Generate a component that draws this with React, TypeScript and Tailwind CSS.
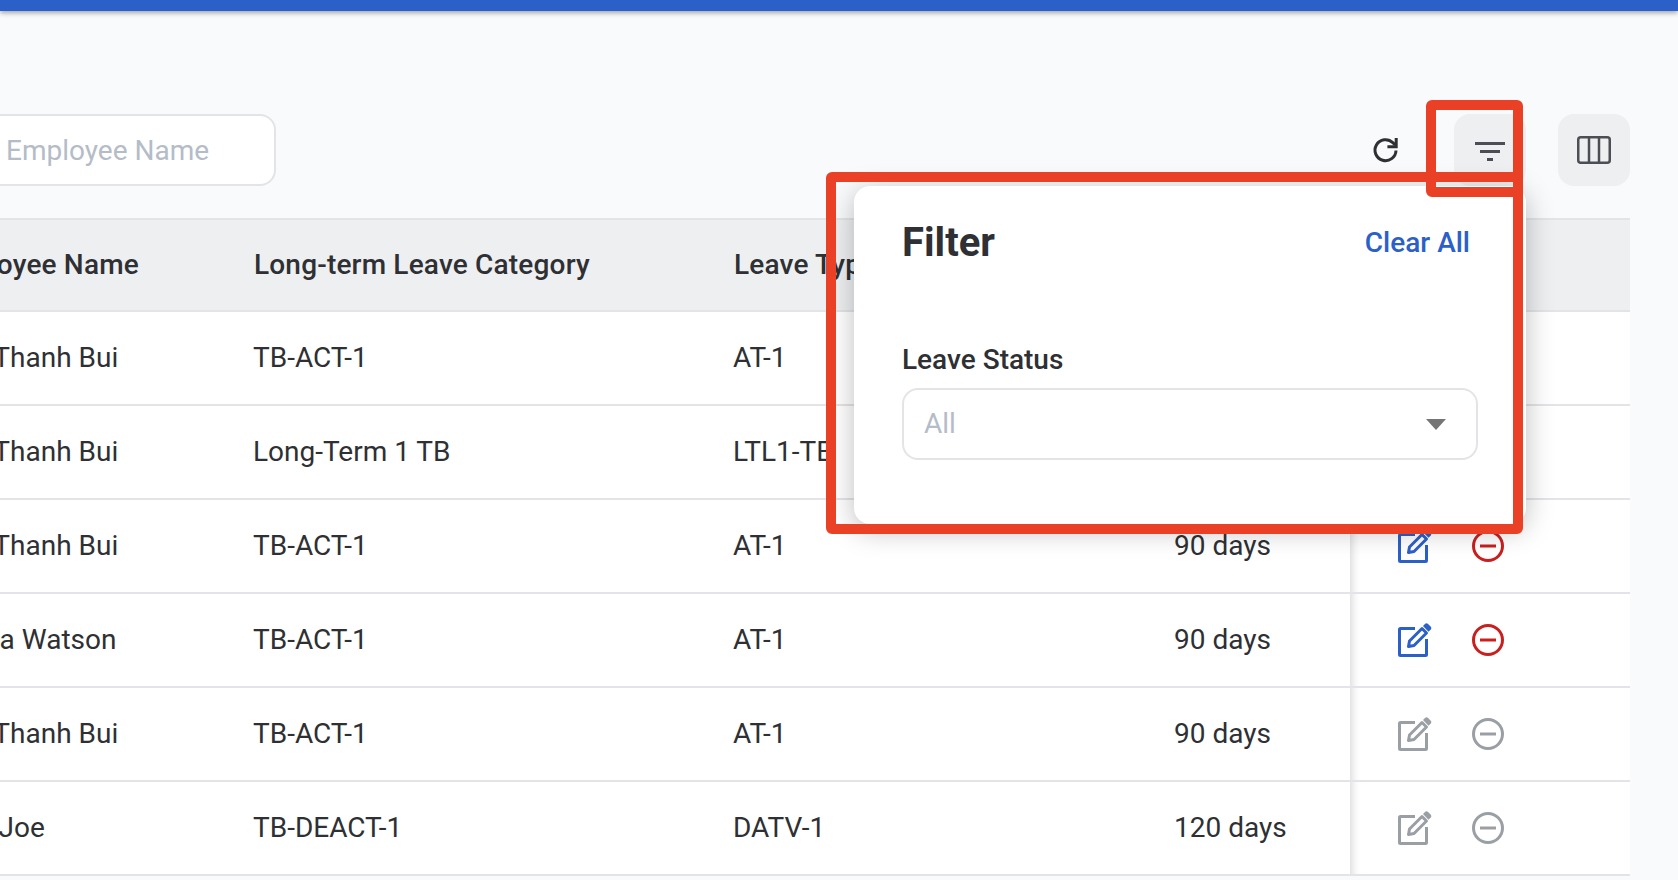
const rows = [
  { name: 'Kim Thanh Bui', category: 'TB-ACT-1', type: 'AT-1', days: '90 days', active: true },
  { name: 'Kim Thanh Bui', category: 'Long-Term 1 TB', type: 'LTL1-TB', days: '90 days', active: true },
  { name: 'Kim Thanh Bui', category: 'TB-ACT-1', type: 'AT-1', days: '90 days', active: true },
  { name: 'Janna Watson', category: 'TB-ACT-1', type: 'AT-1', days: '90 days', active: true },
  { name: 'Kim Thanh Bui', category: 'TB-ACT-1', type: 'AT-1', days: '90 days', active: false },
  { name: 'Max Joe', category: 'TB-DEACT-1', type: 'DATV-1', days: '120 days', active: false },
]

function RefreshIcon() {
  return (
    <svg width="30" height="30" viewBox="0 0 30 30" fill="none" className="text-[#2e3033]">
      <path d="M25 15.500a10.500 10.500 0 1 1-3.200-7.900l2.400 2.300" stroke="currentColor" strokeWidth="3" />
      <path d="M25.200 3v8.800h-8.800" stroke="currentColor" strokeWidth="3" />
    </svg>
  )
}

function FilterIcon() {
  return (
    <svg width="30" height="20" viewBox="0 0 30 20" className="mt-[3px] text-[#4b4e54]">
      <rect x="0" y="0" width="30" height="3" fill="currentColor" />
      <rect x="5" y="8" width="20" height="3" fill="currentColor" />
      <rect x="12" y="16" width="6" height="3" fill="currentColor" />
    </svg>
  )
}

function ColumnsIcon() {
  return (
    <svg width="34" height="28" viewBox="0 0 34 28" fill="none" className="text-[#4b4e54]">
      <rect x="1.250" y="1.250" width="31.500" height="25.500" rx="2.500" stroke="currentColor" strokeWidth="2.500" />
      <path d="M12 1v26M22 1v26" stroke="currentColor" strokeWidth="2.500" />
    </svg>
  )
}

function EditIcon({ className }: { className: string }) {
  return (
    <svg width="34" height="34" viewBox="0 0 34 34" fill="none" className={className}>
      <path d="M17 5.500H2.500a1 1 0 0 0-1 1v25a1 1 0 0 0 1 1h25a1 1 0 0 0 1-1V16" stroke="currentColor" strokeWidth="3" />
      <path d="M11.500 18 24 5.500l4.500 4.500-12.500 12.500-5.500 1z" stroke="currentColor" strokeWidth="3" strokeLinejoin="round" />
      <path d="M25 3l2.200-2.200c.8-.7 1.800-.7 2.600 0l3 3c.7.800.7 1.800 0 2.600L30.500 8.700z" fill="currentColor" />
    </svg>
  )
}

function MinusIcon({ className }: { className: string }) {
  return (
    <svg width="32" height="32" viewBox="0 0 32 32" fill="none" className={className}>
      <circle cx="16" cy="16" r="14.500" stroke="currentColor" strokeWidth="3" />
      <path d="M8 16h16" stroke="currentColor" strokeWidth="3" />
    </svg>
  )
}

export default function App() {
  return (
    <div className="relative h-[880px] w-[1678px] overflow-hidden bg-[#f9fafc] font-['Roboto',sans-serif] text-[28px] text-[#2e3033]">
      <div className="h-[11px] bg-[#2b60c8] shadow-[0_2px_5px_rgba(0,0,0,0.35)]" />

      <div className="mt-[103px] flex h-[72px] items-center pr-12">
        <div className="flex h-[72px] w-[276px] items-center rounded-r-2xl border-2 border-l-0 border-[#e3e4e8] bg-white pl-[6px] pt-[2px] text-[#b4bcc8]">
          Employee Name
        </div>
        <div className="ml-auto flex items-center gap-8">
          <RefreshIcon />
          <div className="ml-[21px] flex h-[72px] w-[72px] items-center justify-center rounded-2xl bg-[#eeeff1]">
            <FilterIcon />
          </div>
          <div className="flex h-[72px] w-[72px] items-center justify-center rounded-2xl bg-[#eeeff1]">
            <ColumnsIcon />
          </div>
        </div>
      </div>

      <div className="mr-12 mt-[32px] bg-white">
        <div className="flex h-[94px] items-center border-y-2 border-[#e3e4e8] bg-[#eeeff1] pb-[1px] font-medium tracking-[0.18px]">
          <div className="-ml-[67px] w-[321px] whitespace-nowrap">Employee Name</div>
          <div className="w-[480px] whitespace-nowrap">Long-term Leave Category</div>
          <div className="w-[440px] whitespace-nowrap">Leave Type</div>
          <div className="whitespace-nowrap">Duration</div>
        </div>
        {rows.map((row, i) => (
          <div key={i} className="flex h-[94px] items-stretch border-b-2 border-[#e3e4e8]">
            <div className="-ml-[62px] flex w-[315px] items-center whitespace-nowrap">{row.name}</div>
            <div className="flex w-[480px] items-center whitespace-nowrap">{row.category}</div>
            <div className="flex w-[441px] items-center whitespace-nowrap">{row.type}</div>
            <div className="flex w-[176px] items-center whitespace-nowrap">{row.days}</div>
            <div className="flex flex-1 items-center gap-[40px] pb-[1px] pl-[48px] shadow-[inset_10px_0_8px_-8px_rgba(0,0,0,0.16)]">
              <EditIcon className={row.active ? 'text-[#2b60c8]' : 'text-[#9a9fa6]'} />
              <MinusIcon className={row.active ? 'text-[#c8201f]' : 'text-[#9a9fa6]'} />
            </div>
          </div>
        ))}
      </div>

      {/* filter popover */}
      <div className="absolute left-[854px] top-[186px] h-[338px] w-[672px] rounded-2xl bg-white px-12 shadow-[0_6px_28px_rgba(0,0,0,0.26)]">
        <div className="flex h-[114px] items-center justify-between pr-[8px]">
          <div className="text-[40px] font-bold">Filter</div>
          <div className="font-medium text-[#2b60c8]">Clear All</div>
        </div>
        <div className="mt-[39px] font-medium">Leave Status</div>
        <div className="mt-[7px] flex h-[72px] items-center justify-between rounded-2xl border-2 border-[#e3e4e8] pl-[20px] pr-[30px] text-[#b4bcc8]">
          All
          <div className="h-0 w-0 border-x-[10px] border-t-[11px] border-x-transparent border-t-[#757575]" />
        </div>
      </div>

      {/* annotation boxes */}
      <div className="absolute left-[826px] top-[172px] h-[362px] w-[697px] rounded-md border-[10px] border-[#ea4025]" />
      <div className="absolute left-[1426px] top-[100px] h-[97px] w-[97px] rounded-md border-[10px] border-[#ea4025]" />
    </div>
  )
}
